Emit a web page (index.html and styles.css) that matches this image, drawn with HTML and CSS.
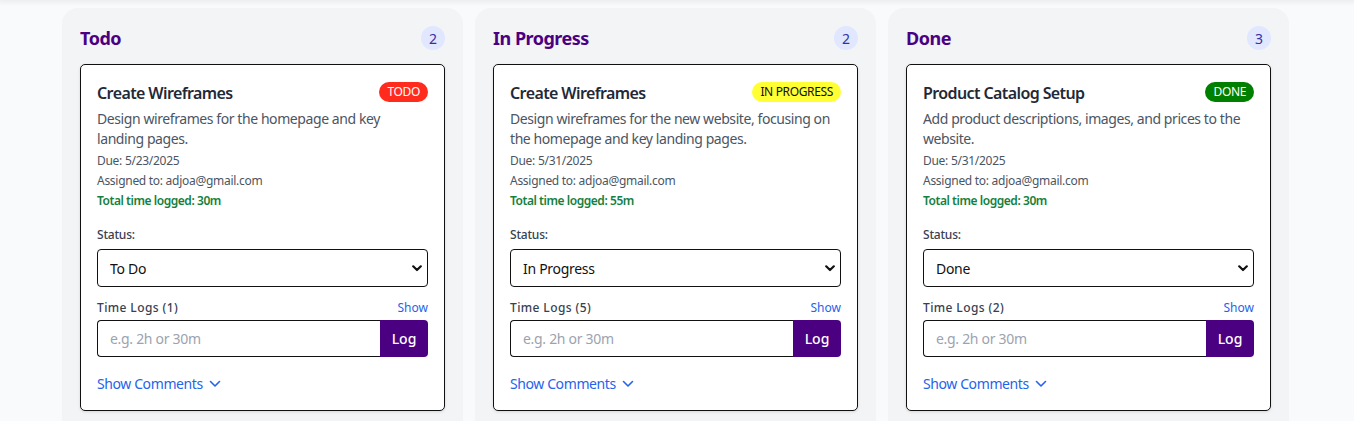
FILE: index.html
```html
<!DOCTYPE html>
<html lang="en">
<head>
<meta charset="utf-8">
<title>Board</title>
<link rel="stylesheet" href="styles.css">
</head>
<body>
<div class="topbar"></div>
<main class="board">
  <section class="column">
    <div class="col-head"><h2>Todo</h2><span class="count">2</span></div>
    <article class="card">
      <div class="card-top"><h3>Create Wireframes</h3><span class="badge todo">TODO</span></div>
      <p class="desc">Design wireframes for the homepage and key landing pages.</p>
      <p class="meta">Due: 5/23/2025</p>
      <p class="meta">Assigned to: adjoa@gmail.com</p>
      <p class="meta total">Total time logged: 30m</p>
      <label class="lbl status-lbl">Status:</label>
      <div class="select-wrap">
        <select class="select"><option selected>To Do</option><option>In Progress</option><option>Done</option></select>
        <svg class="sel-chev" width="10" height="7" viewBox="0 0 10 7"><path d="M1.2 1.3 L5 5 L8.8 1.3" fill="none" stroke="#111" stroke-width="2.2" stroke-linecap="round" stroke-linejoin="round"/></svg>
      </div>
      <div class="logs-head"><span class="lbl">Time Logs (1)</span><a class="link small">Show</a></div>
      <div class="log-row"><input class="log-input" placeholder="e.g. 2h or 30m"><button class="log-btn">Log</button></div>
      <a class="link comments">Show Comments <svg width="12" height="8" viewBox="0 0 12 8"><path d="M1.5 1.5 L6 6 L10.5 1.5" fill="none" stroke="#2563eb" stroke-width="1.6" stroke-linecap="round" stroke-linejoin="round"/></svg></a>
    </article>
  </section>
  <section class="column">
    <div class="col-head"><h2>In Progress</h2><span class="count">2</span></div>
    <article class="card">
      <div class="card-top"><h3>Create Wireframes</h3><span class="badge progress">IN PROGRESS</span></div>
      <p class="desc">Design wireframes for the new website, focusing on the homepage and key landing pages.</p>
      <p class="meta">Due: 5/31/2025</p>
      <p class="meta">Assigned to: adjoa@gmail.com</p>
      <p class="meta total">Total time logged: 55m</p>
      <label class="lbl status-lbl">Status:</label>
      <div class="select-wrap">
        <select class="select"><option>To Do</option><option selected>In Progress</option><option>Done</option></select>
        <svg class="sel-chev" width="10" height="7" viewBox="0 0 10 7"><path d="M1.2 1.3 L5 5 L8.8 1.3" fill="none" stroke="#111" stroke-width="2.2" stroke-linecap="round" stroke-linejoin="round"/></svg>
      </div>
      <div class="logs-head"><span class="lbl">Time Logs (5)</span><a class="link small">Show</a></div>
      <div class="log-row"><input class="log-input" placeholder="e.g. 2h or 30m"><button class="log-btn">Log</button></div>
      <a class="link comments">Show Comments <svg width="12" height="8" viewBox="0 0 12 8"><path d="M1.5 1.5 L6 6 L10.5 1.5" fill="none" stroke="#2563eb" stroke-width="1.6" stroke-linecap="round" stroke-linejoin="round"/></svg></a>
    </article>
  </section>
  <section class="column">
    <div class="col-head"><h2>Done</h2><span class="count">3</span></div>
    <article class="card">
      <div class="card-top"><h3>Product Catalog Setup</h3><span class="badge done">DONE</span></div>
      <p class="desc">Add product descriptions, images, and prices to the website.</p>
      <p class="meta">Due: 5/31/2025</p>
      <p class="meta">Assigned to: adjoa@gmail.com</p>
      <p class="meta total">Total time logged: 30m</p>
      <label class="lbl status-lbl">Status:</label>
      <div class="select-wrap">
        <select class="select"><option>To Do</option><option>In Progress</option><option selected>Done</option></select>
        <svg class="sel-chev" width="10" height="7" viewBox="0 0 10 7"><path d="M1.2 1.3 L5 5 L8.8 1.3" fill="none" stroke="#111" stroke-width="2.2" stroke-linecap="round" stroke-linejoin="round"/></svg>
      </div>
      <div class="logs-head"><span class="lbl">Time Logs (2)</span><a class="link small">Show</a></div>
      <div class="log-row"><input class="log-input" placeholder="e.g. 2h or 30m"><button class="log-btn">Log</button></div>
      <a class="link comments">Show Comments <svg width="12" height="8" viewBox="0 0 12 8"><path d="M1.5 1.5 L6 6 L10.5 1.5" fill="none" stroke="#2563eb" stroke-width="1.6" stroke-linecap="round" stroke-linejoin="round"/></svg></a>
    </article>
  </section>
</main>
</body>
</html>
```
FILE: styles.css
```css
* { box-sizing: border-box; }
html, body { margin: 0; padding: 0; }
body {
  background: #f9fafb;
  font-family: "Noto Sans", "Open Sans", sans-serif;
  color: #1f2937;
  overflow: hidden;
}
.topbar {
  height: 0;
  box-shadow: 0 0 5px 2px rgba(0,0,0,0.08);
}
.board {
  width: 1227px;
  margin: 0 0 0 62px;
  padding-top: 8px;
  display: grid;
  grid-template-columns: repeat(3, 401px);
  gap: 12px;
}
.column {
  background: #f3f4f6;
  border-radius: 16px;
  padding: 18px;
  min-height: 440px;
}
.col-head {
  display: flex;
  align-items: center;
  justify-content: space-between;
  height: 24px;
  margin-bottom: 14px;
}
.col-head h2 {
  margin: 0;
  font-size: 18px;
  font-weight: 700;
  color: #4b0082;
  line-height: 24px;
  letter-spacing: -0.5px;
}
.count {
  width: 24px;
  height: 24px;
  border-radius: 50%;
  background: #e0e7ff;
  color: #3730a3;
  font-size: 14px;
  display: flex;
  align-items: center;
  justify-content: center;
}
.card {
  background: #fff;
  border: 1px solid #111;
  border-radius: 5px;
  padding: 16px;
  box-shadow: 0 1px 3px rgba(0,0,0,0.12);
  display: flex;
  flex-direction: column;
}
.card-top {
  display: flex;
  justify-content: space-between;
  align-items: flex-start;
}
.card-top h3 {
  margin: 0;
  font-size: 16px;
  font-weight: 600;
  line-height: 24px;
  color: #1f2937;
  letter-spacing: -0.6px;
}
.badge {
  margin-top: 1px;
  height: 20px;
  line-height: 20px;
  padding: 0 8px;
  border-radius: 10px;
  font-size: 12px;
  letter-spacing: -0.35px;
}
.badge.todo { background: #ff2b1c; color: #fff; }
.badge.progress { background: #ffff33; color: #111; }
.badge.done { background: #008000; color: #fff; }
.desc {
  margin: 4px 0 0;
  font-size: 14px;
  line-height: 20px;
  color: #4b5563;
  letter-spacing: -0.42px;
}
.meta {
  margin: 4px 0 0;
  font-size: 12px;
  line-height: 16px;
  color: #4b5563;
  letter-spacing: -0.28px;
}
.meta.total { color: #15803d; font-weight: 600; letter-spacing: -0.45px; }
.lbl {
  font-size: 12px;
  line-height: 16px;
  font-weight: 500;
  color: #374151;
}
.status-lbl { margin-top: 18px; margin-bottom: 6px; letter-spacing: -0.2px; }
.logs-head .lbl { font-weight: 500; letter-spacing: 0.4px; }
.select-wrap { position: relative; }
.select {
  display: block;
  width: 100%;
  height: 38px;
  appearance: none;
  -webkit-appearance: none;
  background: #fff;
  border: 1px solid #111;
  border-radius: 4px;
  padding: 0 12px;
  font-family: inherit;
  font-size: 14px;
  color: #111;
  letter-spacing: -0.3px;
}
.sel-chev {
  position: absolute;
  right: 6px;
  top: 16px;
  pointer-events: none;
}
.logs-head {
  display: flex;
  justify-content: space-between;
  align-items: center;
  margin-top: 13px;
}
.link { color: #2563eb; text-decoration: none; cursor: pointer; }
.link.small { font-size: 12px; line-height: 16px; }
.log-row {
  display: flex;
  margin-top: 4px;
  height: 37px;
}
.log-input {
  flex: 1;
  min-width: 0;
  border: 1px solid #111;
  border-right: none;
  border-radius: 4px 0 0 4px;
  padding: 0 12px;
  font-family: inherit;
  font-size: 14px;
  color: #111;
  background: #fff;
  letter-spacing: -0.3px;
}
.log-input::placeholder { color: #9ca3af; }
.log-btn {
  width: 48px;
  border: none;
  border-radius: 0 4px 4px 0;
  background: #4b0082;
  color: #fff;
  font-family: inherit;
  font-size: 14px;
  font-weight: 500;
}
.comments {
  margin-top: 17px;
  font-size: 14px;
  line-height: 20px;
  display: inline-flex;
  align-items: center;
  gap: 6px;
  align-self: flex-start;
  letter-spacing: -0.4px;
}
```
